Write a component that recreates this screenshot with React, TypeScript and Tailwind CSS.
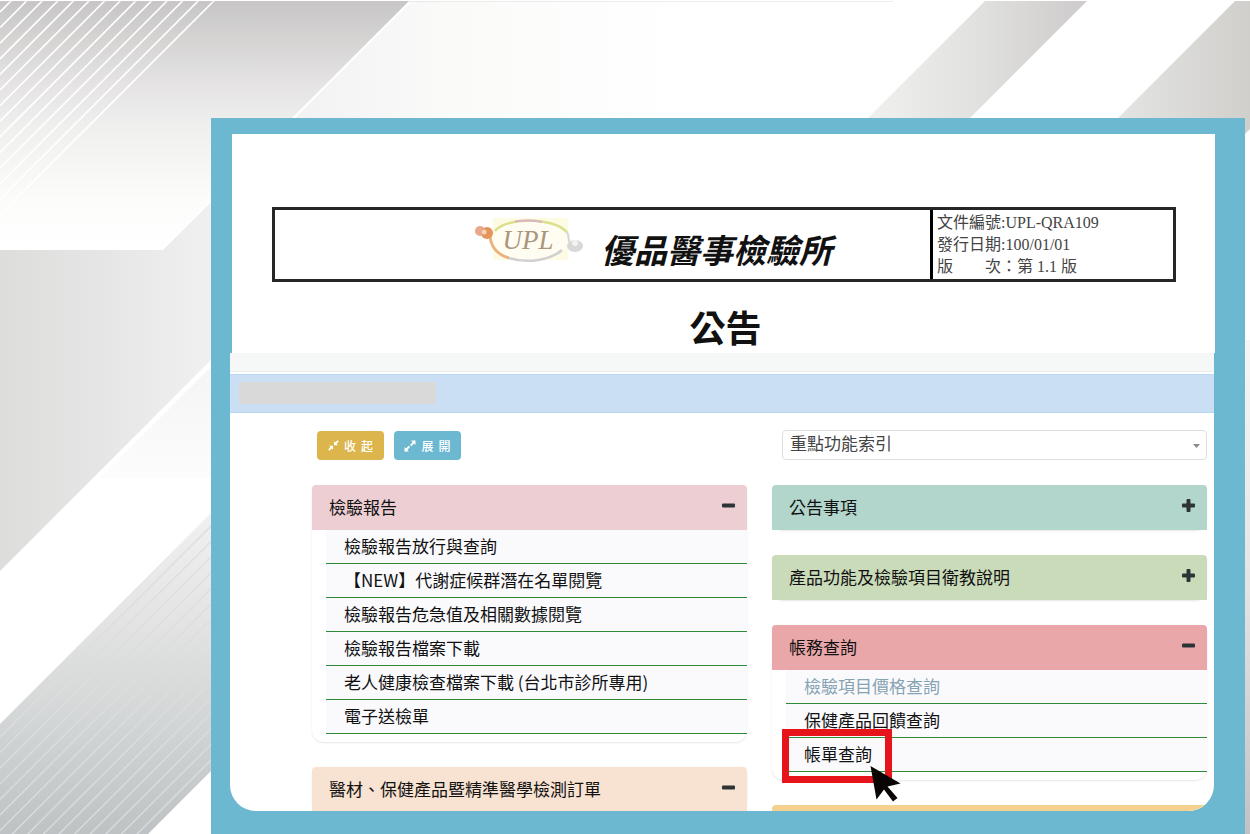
import type { ReactNode } from "react";

const topHatch = Array.from({ length: 14 }, (_, i) => 12 + i * 15.6);
const bottomHatch = Array.from({ length: 20 }, (_, i) => 737 + i * 15.6);

function Backdrop() {
  return (
    <svg
      className="absolute inset-0 h-full w-full"
      viewBox="0 0 1250 834"
      preserveAspectRatio="xMinYMin slice"
      aria-hidden="true"
    >
      <defs>
        <linearGradient id="topLeft" gradientUnits="userSpaceOnUse" x1="0" y1="0" x2="0" y2="250">
          <stop offset="0" stopColor="#c7c5c6" />
          <stop offset="0.16" stopColor="#d5d4d3" />
          <stop offset="0.34" stopColor="#e5e3e4" />
          <stop offset="0.5" stopColor="#efefee" />
          <stop offset="0.8" stopColor="#fcfcfb" />
          <stop offset="1" stopColor="#ffffff" />
        </linearGradient>
        <linearGradient id="topMiddle" gradientUnits="userSpaceOnUse" x1="290" y1="0" x2="680" y2="0">
          <stop offset="0" stopColor="#f2f2f3" />
          <stop offset="0.4" stopColor="#fafaf9" />
          <stop offset="1" stopColor="#ffffff" />
        </linearGradient>
        <linearGradient id="midLeft" gradientUnits="userSpaceOnUse" x1="0" y1="0" x2="211" y2="0">
          <stop offset="0" stopColor="#dddddb" />
          <stop offset="0.4" stopColor="#e5e4e4" />
          <stop offset="1" stopColor="#f0f0f0" />
        </linearGradient>
        <linearGradient id="pale" gradientUnits="userSpaceOnUse" x1="0" y1="370" x2="0" y2="478">
          <stop offset="0" stopColor="#f5f5f5" />
          <stop offset="1" stopColor="#fcfcfc" />
        </linearGradient>
        <linearGradient id="bottomLeft" gradientUnits="userSpaceOnUse" x1="0" y1="514" x2="0" y2="834">
          <stop offset="0" stopColor="#f0f0f0" />
          <stop offset="0.35" stopColor="#e2e3e2" />
          <stop offset="0.62" stopColor="#d4d7d7" />
          <stop offset="1" stopColor="#bfc2c4" />
        </linearGradient>
        <linearGradient id="bandOne" gradientUnits="userSpaceOnUse" x1="868" y1="0" x2="1087" y2="0">
          <stop offset="0" stopColor="#f0f0ef" />
          <stop offset="0.5" stopColor="#e1e1df" />
          <stop offset="1" stopColor="#cdcbcb" />
        </linearGradient>
        <linearGradient id="bandTwo" gradientUnits="userSpaceOnUse" x1="1118" y1="0" x2="1250" y2="0">
          <stop offset="0" stopColor="#e4e4e2" />
          <stop offset="1" stopColor="#d0cfcc" />
        </linearGradient>
        <linearGradient id="edge" gradientUnits="userSpaceOnUse" x1="0" y1="340" x2="0" y2="834">
          <stop offset="0" stopColor="#f6f6f6" />
          <stop offset="0.5" stopColor="#e4e4e5" />
          <stop offset="1" stopColor="#c2c2c4" />
        </linearGradient>
        <clipPath id="bottomClip">
          <polygon points="0,724 211,513 211,771 148,834 0,834" />
        </clipPath>
      </defs>
      <rect width="1250" height="834" fill="#ffffff" />
      <polygon points="0,1 409,1 160,250 0,250" fill="url(#topLeft)" />
      {topHatch.map((c) => (
        <line key={c} x1={c} y1="0" x2="0" y2={c} stroke="#ffffff" strokeWidth="1.7" />
      ))}
      <polygon points="412,1 900,1 900,140 273,140" fill="url(#topMiddle)" />
      <polygon points="0,250 163,250 230,183 230,341 0,571" fill="url(#midLeft)" />
      <polygon points="230,348 100,478 230,478" fill="url(#pale)" />
      <polygon points="0,724 211,513 211,771 148,834 0,834" fill="url(#bottomLeft)" />
      <g clipPath="url(#bottomClip)" stroke="#dcdddc" strokeWidth="1.3">
        {bottomHatch.map((c) => (
          <line key={c} x1="0" y1={c} x2="250" y2={c - 250} />
        ))}
      </g>
      <polygon points="985,1 1087,1 957,131 855,131" fill="url(#bandOne)" />
      <polygon points="1235,1 1250,1 1250,129 1245,134 1102,134" fill="url(#bandTwo)" />
      <rect x="1244" y="340" width="6" height="494" fill="url(#edge)" />
      <rect y="1" width="893" height="1" fill="#c9cccb" opacity="0.35" />
    </svg>
  );
}

function Logo() {
  return (
    <svg className="h-14 w-[112px] shrink-0" viewBox="0 0 112 56" role="img" aria-label="UPL">
      <rect x="20" y="1" width="75" height="42" fill="#fdfbe3" />
      <ellipse cx="57" cy="24" rx="38" ry="20" fill="#fffdf2" />
      <path d="M22 14 C32 1 78 -1 94 15" fill="none" stroke="#dbe08c" strokeWidth="2.5" />
      <path d="M42 4.500 C50 3 62 3 69 5" fill="none" stroke="#d9b3c4" strokeWidth="2" />
      <path d="M17 19 C18 32 26 38 36 41" fill="none" stroke="#eab27c" strokeWidth="3" />
      <path d="M36 41 C54 47 78 43 89 33" fill="none" stroke="#d0d0d0" strokeWidth="2.5" />
      <path d="M94 15 C97 20 94 26 100 30" fill="none" stroke="#d6d6d6" strokeWidth="2" />
      <circle cx="7" cy="14" r="5" fill="#e9a88c" />
      <circle cx="14" cy="16" r="6" fill="#e4955c" />
      <circle cx="11" cy="15" r="2.500" fill="#f7d3b8" />
      <ellipse cx="102" cy="29" rx="8" ry="6" fill="#d8d8d8" />
      <circle cx="102" cy="26" r="3" fill="#f2f2f2" />
      <text
        x="55"
        y="32"
        textAnchor="middle"
        fill="#ab957c"
        fontSize="27"
        fontStyle="italic"
        fontFamily="'Liberation Serif', serif"
      >
        UPL
      </text>
    </svg>
  );
}

function DocumentHeader() {
  return (
    <header className="-mr-px ml-[2px] flex h-[219px] shrink-0 flex-col bg-white pt-[73px] text-[#111]">
      <div className="mr-[39px] ml-10 flex h-[75px] border-[3px] border-[#262626]">
        <div className="flex flex-1 items-center gap-4 pl-[198px]">
          <Logo />
          <p className="pt-2 text-[33px] leading-10 font-bold whitespace-nowrap italic">優品醫事檢驗所</p>
        </div>
        <div className="w-[243px] border-l-[3px] border-black pt-[2px] pl-1 font-['Liberation_Serif','Noto_Sans_CJK_TC',serif] text-base leading-[22px] whitespace-pre text-[#444]">
          <p>文件編號:UPL-QRA109</p>
          <p>發行日期:100/01/01</p>
          <p>版　　次：第 1.1 版</p>
        </div>
      </div>
      <h1 className="mt-[18px] pl-1 text-center text-4xl leading-[52px] font-bold">公告</h1>
    </header>
  );
}

function ToggleIcon({ open }: { open: boolean }) {
  return (
    <svg className="h-[15px] w-[15px]" viewBox="0 0 15 15" fill="#2d3436" aria-hidden="true">
      <rect x="1" y="5.500" width="13" height="4" rx="1" />
      {!open && <rect x="5.500" y="1" width="4" height="13" rx="1" />}
    </svg>
  );
}

function CompressIcon() {
  return (
    <svg className="h-[11px] w-[11px]" viewBox="0 0 11 11" fill="#ffffff" aria-hidden="true">
      <path d="M6 5.200 V1.200 L7.300 2.400 L9.500 0.300 L10.800 1.500 L8.600 3.700 L9.900 5.200 Z" />
      <path d="M5 5.800 V9.800 L3.700 8.600 L1.500 10.700 L0.200 9.500 L2.400 7.300 L1.100 5.800 Z" />
    </svg>
  );
}

function ExpandIcon() {
  return (
    <svg className="h-3 w-3" viewBox="0 0 12 12" fill="#ffffff" aria-hidden="true">
      <path d="M7 0.500 H11.500 V5 L10.100 3.600 L7.300 6.300 L6 5 L8.600 2.100 Z" />
      <path d="M5 11.500 H0.500 V7 L1.900 8.400 L4.700 5.700 L6 7 L3.400 9.900 Z" />
    </svg>
  );
}

type CardProps = { title: string; tone: string; open?: boolean; children?: ReactNode };

function Card({ title, tone, open = false, children }: CardProps) {
  return (
    <section className="rounded-md rounded-b-xl bg-white shadow-[0_1px_2px_rgba(0,0,0,0.1)]">
      <h2>
        <button
          type="button"
          aria-expanded={open}
          className={`flex h-[45px] w-full items-center justify-between rounded-t pr-[11px] pb-[2px] pl-[17px] text-left ${tone}`}
        >
          <span>{title}</span>
          <span className="pb-[3px]">
            <ToggleIcon open={open} />
          </span>
        </button>
      </h2>
      {children}
    </section>
  );
}

function Items({ children }: { children: ReactNode }) {
  return <ul className="pb-2 pl-[14px]">{children}</ul>;
}

function Item({ label, muted = false, children }: { label: string; muted?: boolean; children?: ReactNode }) {
  return (
    <li className="relative h-[34px] border-b border-[#2f8a38] bg-[#fafafd]">
      <a href="#" className={`block pl-[18px] leading-[31px] ${muted ? "text-[#86a3b3]" : "text-[#111]"}`}>
        {label}
      </a>
      {children}
    </li>
  );
}

function Pointer() {
  return (
    <svg className="absolute top-[28px] left-[84px] h-9 w-8" viewBox="0 0 32 36" aria-hidden="true">
      <path d="M0.500 0 L30.500 17.500 L17.500 20.500 L27.500 32 L23 35.500 L14 23.500 L6.500 33.500 Z" fill="#0a0505" />
    </svg>
  );
}

export default function App() {
  return (
    <main className="relative flex h-screen flex-col overflow-hidden bg-white pt-[118px] pr-[5px] pl-[211px] font-['Noto_Sans_CJK_TC',sans-serif] text-[17px] leading-6 text-[#111]">
      <Backdrop />
      <div className="relative flex min-h-0 flex-1 flex-col bg-[#6cb8d0] pt-4 pr-[31px] pb-[23px] pl-[19px]">
        <DocumentHeader />
        <div className="min-h-0 flex-1 overflow-hidden rounded-b-[26px] bg-white">
          <div className="h-[19px] border-b border-[#eceeee] bg-[#f6f8f7]" />
          <div className="mt-[2px] h-[39px] border-y border-[#b9d7f2] bg-[#cbdff4] px-[9px] py-[7px]">
            <div className="h-[22px] w-[197px] bg-[#d9d9d9]" />
          </div>
          <div className="grid grid-cols-2 gap-x-[25px] pt-[17px] pr-[7px] pl-[82px]">
            <div className="flex h-[30px] items-end gap-[10px] pl-[5px] text-xs font-medium text-white">
              <button
                type="button"
                aria-label="收起"
                className="flex h-[29px] w-[67px] items-center justify-center gap-[5px] rounded bg-[#dcb54c]"
              >
                <CompressIcon />
                <span>收</span>
                <span>起</span>
              </button>
              <button
                type="button"
                aria-label="展開"
                className="flex h-[29px] w-[67px] items-center justify-center gap-[5px] rounded bg-[#6cb8d0]"
              >
                <ExpandIcon />
                <span>展</span>
                <span>開</span>
              </button>
            </div>
            <div className="relative pl-[10px]">
              <select
                aria-label="重點功能索引"
                className="block h-[30px] w-full appearance-none rounded border border-[#dcdee2] bg-white pb-1 pl-[7px] text-[#444]"
              >
                <option>重點功能索引</option>
              </select>
              <svg className="pointer-events-none absolute top-[14px] right-[7px] h-1 w-[7px]" viewBox="0 0 7 4" aria-hidden="true">
                <path d="M0 0 H7 L3.500 4 Z" fill="#8a8a8a" />
              </svg>
            </div>
            <div className="flex flex-col gap-[25px] pt-[25px]">
              <Card title="檢驗報告" tone="bg-[#edced3]" open>
                <Items>
                  <Item label="檢驗報告放行與查詢" />
                  <Item label="【NEW】代謝症候群潛在名單閱覽" />
                  <Item label="檢驗報告危急值及相關數據閱覽" />
                  <Item label="檢驗報告檔案下載" />
                  <Item label="老人健康檢查檔案下載 (台北市診所專用)" />
                  <Item label="電子送檢單" />
                </Items>
              </Card>
              <Card title="醫材、保健產品暨精準醫學檢測訂單" tone="bg-[#f8e2d2]" open />
            </div>
            <div className="flex flex-col gap-[25px] pt-[25px]">
              <Card title="公告事項" tone="bg-[#b2d6cc]" />
              <Card title="產品功能及檢驗項目衛教說明" tone="bg-[#cadbb9]" />
              <Card title="帳務查詢" tone="bg-[#e9a7aa]" open>
                <Items>
                  <Item label="檢驗項目價格查詢" muted />
                  <Item label="保健產品回饋查詢" />
                  <Item label="帳單查詢">
                    <span className="pointer-events-none absolute -top-[9px] -left-1 h-[54px] w-[110px] border-[7px] border-[#e8141b]" />
                    <Pointer />
                  </Item>
                </Items>
              </Card>
              <Card title="" tone="bg-[#f4d28e]" />
            </div>
          </div>
        </div>
      </div>
    </main>
  );
}
